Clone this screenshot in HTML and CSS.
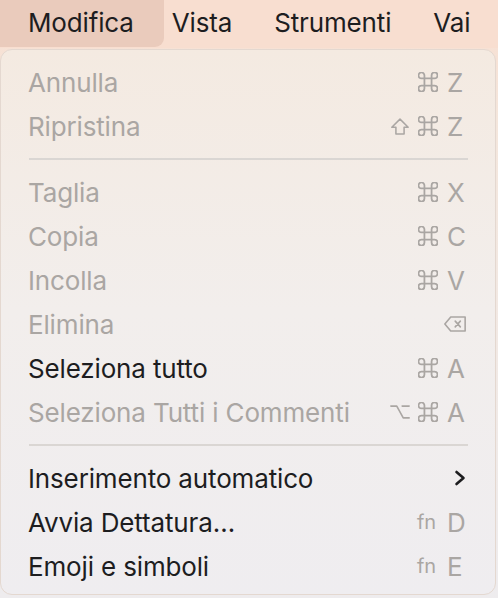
FILE: index.html
```html
<!DOCTYPE html>
<html>
<head>
    <title>Modifica</title>
    <link rel="stylesheet" href="styles.css">
</head>
<body>
    <div class="menubar">
        <div class="menu-title active">Modifica</div>
        <div class="menu-title">Vista</div>
        <div class="menu-title">Strumenti</div>
        <div class="menu-title">Vai</div>
    </div>

    <div class="menu">
        <div class="item disabled">
            <span class="label">Annulla</span>
            <span class="keys">
                <span class="mod"></span>
                <span class="mod"><svg class="cmd" viewBox="1.6 1.6 16.8 16.8"><path d="M7 7V4.5A2.5 2.5 0 1 0 4.5 7H15.5A2.5 2.5 0 1 0 13 4.5V15.5A2.5 2.5 0 1 0 15.5 13H4.5A2.5 2.5 0 1 0 7 15.5Z"/></svg></span>
                <span class="key">Z</span>
            </span>
        </div>
        <div class="item disabled">
            <span class="label">Ripristina</span>
            <span class="keys">
                <span class="mod"><svg class="shift" viewBox="1.2 1.7 17.6 16.1"><path d="M10 2.5L2 10.5H6V17H14V10.5H18Z"/></svg></span>
                <span class="mod"><svg class="cmd" viewBox="1.6 1.6 16.8 16.8"><path d="M7 7V4.5A2.5 2.5 0 1 0 4.5 7H15.5A2.5 2.5 0 1 0 13 4.5V15.5A2.5 2.5 0 1 0 15.5 13H4.5A2.5 2.5 0 1 0 7 15.5Z"/></svg></span>
                <span class="key">Z</span>
            </span>
        </div>

        <div class="separator"></div>

        <div class="item disabled">
            <span class="label">Taglia</span>
            <span class="keys">
                <span class="mod"></span>
                <span class="mod"><svg class="cmd" viewBox="1.6 1.6 16.8 16.8"><path d="M7 7V4.5A2.5 2.5 0 1 0 4.5 7H15.5A2.5 2.5 0 1 0 13 4.5V15.5A2.5 2.5 0 1 0 15.5 13H4.5A2.5 2.5 0 1 0 7 15.5Z"/></svg></span>
                <span class="key">X</span>
            </span>
        </div>
        <div class="item disabled">
            <span class="label">Copia</span>
            <span class="keys">
                <span class="mod"></span>
                <span class="mod"><svg class="cmd" viewBox="1.6 1.6 16.8 16.8"><path d="M7 7V4.5A2.5 2.5 0 1 0 4.5 7H15.5A2.5 2.5 0 1 0 13 4.5V15.5A2.5 2.5 0 1 0 15.5 13H4.5A2.5 2.5 0 1 0 7 15.5Z"/></svg></span>
                <span class="key">C</span>
            </span>
        </div>
        <div class="item disabled">
            <span class="label">Incolla</span>
            <span class="keys">
                <span class="mod"></span>
                <span class="mod"><svg class="cmd" viewBox="1.6 1.6 16.8 16.8"><path d="M7 7V4.5A2.5 2.5 0 1 0 4.5 7H15.5A2.5 2.5 0 1 0 13 4.5V15.5A2.5 2.5 0 1 0 15.5 13H4.5A2.5 2.5 0 1 0 7 15.5Z"/></svg></span>
                <span class="key">V</span>
            </span>
        </div>
        <div class="item disabled">
            <span class="label">Elimina</span>
            <span class="keys">
                <span class="mod"></span>
                <span class="mod"></span>
                <span class="key wide"><svg class="del" viewBox="0.7 0.7 20.6 14.6"><path d="M7 1.5H20.5V14.5H7L1.5 8Z"/><path d="M11.2 5.3L16 10.7M16 5.3L11.2 10.7"/></svg></span>
            </span>
        </div>
        <div class="item">
            <span class="label">Seleziona tutto</span>
            <span class="keys">
                <span class="mod"></span>
                <span class="mod"><svg class="cmd" viewBox="1.6 1.6 16.8 16.8"><path d="M7 7V4.5A2.5 2.5 0 1 0 4.5 7H15.5A2.5 2.5 0 1 0 13 4.5V15.5A2.5 2.5 0 1 0 15.5 13H4.5A2.5 2.5 0 1 0 7 15.5Z"/></svg></span>
                <span class="key">A</span>
            </span>
        </div>
        <div class="item disabled">
            <span class="label">Seleziona Tutti i Commenti</span>
            <span class="keys">
                <span class="mod"><svg class="opt" viewBox="0.7 4.2 18.6 12.6"><path d="M1.5 5H7L13 16H18.5M12 5H18.5"/></svg></span>
                <span class="mod"><svg class="cmd" viewBox="1.6 1.6 16.8 16.8"><path d="M7 7V4.5A2.5 2.5 0 1 0 4.5 7H15.5A2.5 2.5 0 1 0 13 4.5V15.5A2.5 2.5 0 1 0 15.5 13H4.5A2.5 2.5 0 1 0 7 15.5Z"/></svg></span>
                <span class="key">A</span>
            </span>
        </div>

        <div class="separator"></div>

        <div class="item">
            <span class="label">Inserimento automatico</span>
            <span class="keys">
                <span class="mod"></span>
                <span class="mod"></span>
                <span class="key wide"><svg class="chevron" viewBox="0 0 12 16"><path d="M2.5 2L9.5 8L2.5 14"/></svg></span>
            </span>
        </div>
        <div class="item">
            <span class="label">Avvia Dettatura…</span>
            <span class="keys">
                <span class="mod"></span>
                <span class="mod fn">fn</span>
                <span class="key">D</span>
            </span>
        </div>
        <div class="item">
            <span class="label">Emoji e simboli</span>
            <span class="keys">
                <span class="mod"></span>
                <span class="mod fn">fn</span>
                <span class="key">E</span>
            </span>
        </div>
    </div>
</body>
</html>
```

FILE: styles.css
```css
html, body { margin: 0; padding: 0; }
body {
    width: 498px;
    height: 598px;
    overflow: hidden;
    font-family: Inter, "Noto Sans", sans-serif;
    letter-spacing: -0.15px;
    background: linear-gradient(#f8ded0 0, #f4e6dc 120px, #eeecee 598px);
    color: #1d1d1f;
}

.menubar { display: flex; height: 48px; align-items: flex-start; background: #f8ded0; }
.menu-title { font-size: 26px; line-height: 46px; padding: 0 21px; }
.menu-title.active {
    background: #eacbbc;
    border-radius: 0 0 9px 0;
    padding: 0 30px 0 28px;
    margin-right: -13px;
    height: 47px;
}

.menu {
    width: 496px;
    height: 546px;
    margin-top: 1px;
    box-sizing: border-box;
    padding: 10px 0 0;
    border: 1px solid #e4d8d0;
    border-radius: 12px;
    background: linear-gradient(#f4eae1 0, #f2eeec 260px, #efedf0 546px);
}

.item { display: flex; align-items: center; height: 44px; padding: 0 29px 0 27px; font-size: 26px; }
.item .label { flex: 1; white-space: nowrap; }
.item.disabled { color: #aaa6a3; }

.keys { display: flex; align-items: center; color: #aaa6a3; }
.mod { width: 22px; height: 44px; display: flex; align-items: center; justify-content: center; margin-left: 6px; }
.mod:first-child { margin-left: 0; }
.key { width: 19px; padding-left: 2px; margin-left: 6px; }
.key.wide { width: 22px; padding-left: 0; margin-left: 5px; display: flex; justify-content: flex-end; }

.keys svg { flex: none; fill: none; stroke: #aaa6a3; stroke-width: 1.5; stroke-linejoin: round; stroke-linecap: round; }
.cmd { width: 20px; height: 20px; }
.shift { width: 18px; height: 17px; }
.opt { width: 20px; height: 14px; }
.del { width: 22px; height: 16px; }
.chevron { width: 12px; height: 16px; }
.keys svg.chevron { stroke: #1d1d1f; stroke-width: 2.6; }
.fn { font-size: 20px; justify-content: flex-start; }

.separator { height: 2px; margin: 10px 27px 10px 28px; background: #dad6d3; }
```
